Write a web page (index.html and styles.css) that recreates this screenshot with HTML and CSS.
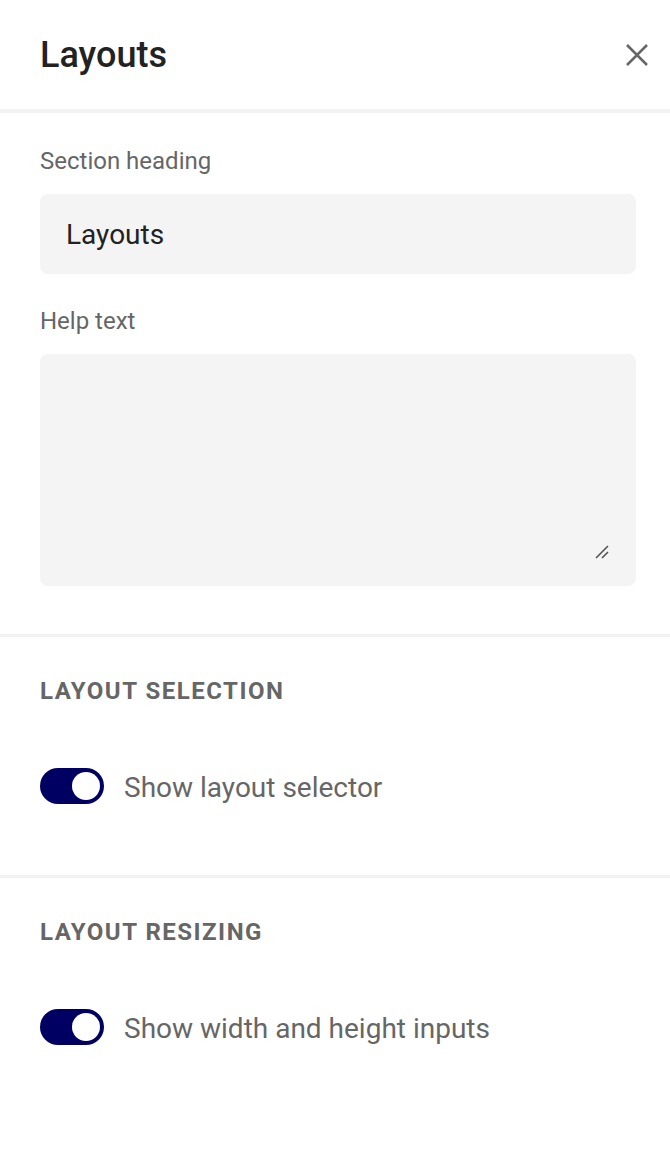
FILE: index.html
```html
<!DOCTYPE html>
<html lang="en">
<head>
<meta charset="utf-8">
<title>Layouts</title>
<link rel="stylesheet" href="styles.css">
</head>
<body>
<div class="panel">
  <header class="header">
    <h1 class="title">Layouts</h1>
    <button class="close" aria-label="Close">
      <svg width="22" height="22" viewBox="0 0 22 22"><path d="M1 1 L21 21 M21 1 L1 21" stroke="#666" stroke-width="2.5" fill="none"/></svg>
    </button>
  </header>
  <section class="section fields">
    <label class="label">Section heading</label>
    <div class="input">Layouts</div>
    <label class="label help">Help text</label>
    <div class="textarea">
      <svg class="grip" width="14" height="14" viewBox="0 0 14 14"><path d="M1 13 L13 1 M7 13 L13 7" stroke="#555" stroke-width="1.6" fill="none"/></svg>
    </div>
  </section>
  <section class="section group">
    <h2 class="group-title">Layout selection</h2>
    <div class="toggle-row">
      <span class="toggle"><span class="knob"></span></span>
      <span class="toggle-label">Show layout selector</span>
    </div>
  </section>
  <section class="section group last">
    <h2 class="group-title">Layout resizing</h2>
    <div class="toggle-row">
      <span class="toggle"><span class="knob"></span></span>
      <span class="toggle-label">Show width and height inputs</span>
    </div>
  </section>
</div>
</body>
</html>
```

FILE: styles.css
```css
* { box-sizing: border-box; }
body {
  margin: 0;
  background: #fff;
  font-family: Roboto, "Liberation Sans", sans-serif;
  color: #666;
}
.panel { width: 670px; }
.header {
  height: 109px;
  display: flex;
  align-items: center;
  justify-content: space-between;
  padding: 0 22px 0 40px;
  border-bottom: 4px solid #f2f2f2;
  box-sizing: content-box;
}
.title {
  margin: 0;
  font-size: 36px;
  line-height: 40px;
  font-weight: 500;
  color: #222;
  padding-top: 1px;
}
.close {
  border: 0;
  background: none;
  padding: 0;
  width: 22px;
  height: 22px;
  display: flex;
}
.section { padding: 0 34px 0 40px; }
.fields {
  padding-top: 36px;
  padding-bottom: 48px;
  border-bottom: 3px solid #f2f2f2;
}
.label {
  display: block;
  font-size: 24px;
  line-height: 24px;
  color: #666;
}
.input {
  margin-top: 21px;
  height: 80px;
  background: #f4f4f4;
  border-radius: 8px;
  padding: 0 26px;
  display: flex;
  align-items: center;
  font-size: 28px;
  color: #222;
}
.help { margin-top: 35px; }
.textarea {
  margin-top: 21px;
  height: 232px;
  background: #f4f4f4;
  border-radius: 8px;
  display: flex;
  align-items: flex-end;
  justify-content: flex-end;
  padding: 0 27px 27px 0;
}
.group {
  padding-top: 42px;
  padding-bottom: 71px;
  border-bottom: 3px solid #f2f2f2;
}
.group.last { border-bottom: 0; }
.group-title {
  margin: 0;
  font-size: 24px;
  line-height: 24px;
  font-weight: 700;
  letter-spacing: 1.5px;
  text-transform: uppercase;
  color: #666;
}
.toggle-row {
  margin-top: 65px;
  display: flex;
  align-items: flex-start;
  gap: 20px;
}
.toggle {
  width: 64px;
  height: 36px;
  border-radius: 18px;
  background: #000062;
  display: flex;
  align-items: center;
  justify-content: flex-end;
  padding-right: 4px;
}
.knob {
  width: 28px;
  height: 28px;
  border-radius: 50%;
  background: #fff;
}
.toggle-label {
  font-size: 28px;
  line-height: 36px;
  padding-top: 2px;
  margin-bottom: -2px;
  color: #666;
}
```
